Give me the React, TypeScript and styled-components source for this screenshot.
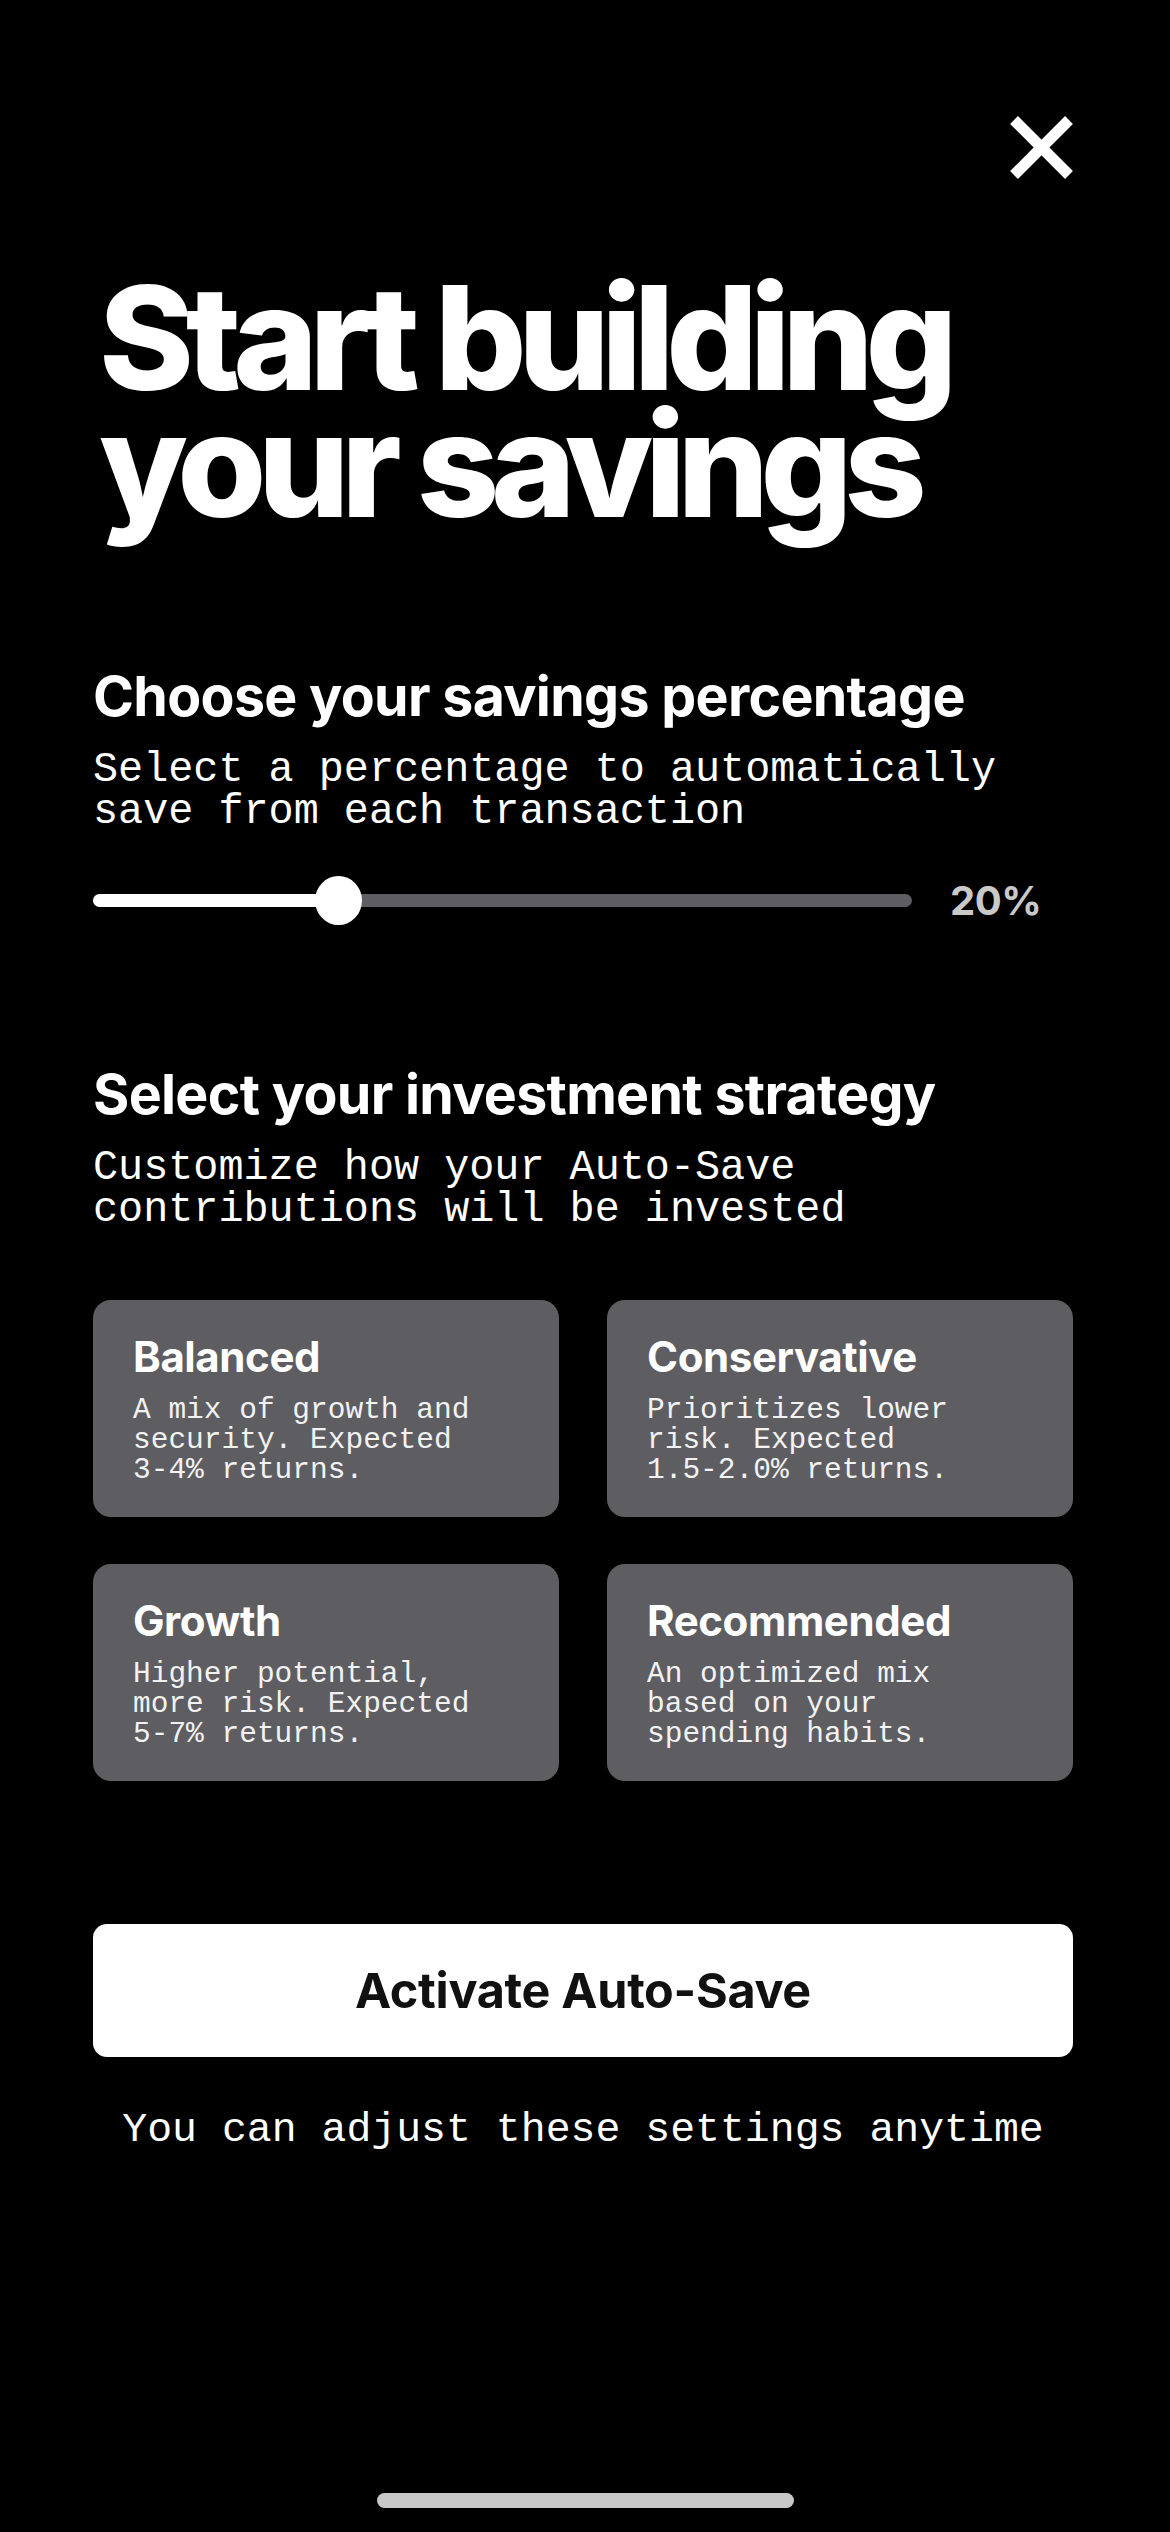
import React from "react";
import styled, { createGlobalStyle } from "styled-components";

const GlobalStyle = createGlobalStyle`
  html, body {
    margin: 0;
    padding: 0;
    background: #000;
  }
  * { box-sizing: border-box; }
`;

const SANS = `"Inter", "Liberation Sans", "Noto Sans", sans-serif`;
const MONO = `"Liberation Mono", "DejaVu Sans Mono", monospace`;

const Page = styled.main`
  position: relative;
  min-height: 2532px;
  width: 1170px;
  background: #000;
  padding: 116px 97px 0 93px;
  display: flex;
  flex-direction: column;
  color: #fff;
`;

const TopBar = styled.div`
  display: flex;
  justify-content: flex-end;
`;

const CloseButton = styled.button`
  width: 63px;
  height: 63px;
  padding: 0;
  border: none;
  background: transparent;
  display: flex;
  align-items: center;
  justify-content: center;
  cursor: pointer;
`;

const Title = styled.h1`
  margin: 95px 0 0 0;
  padding-left: 6px;
  font-family: ${SANS};
  font-weight: 800;
  font-size: 144px;
  line-height: 127px;
  letter-spacing: -8.3px;
  color: #fff;
`;

const Section = styled.section<{ $top: number }>`
  margin-top: ${(p) => p.$top}px;
  display: flex;
  flex-direction: column;
`;

const Heading = styled.h2`
  margin: 0;
  font-family: ${SANS};
  font-weight: 700;
  font-size: 55.5px;
  line-height: 56px;
  letter-spacing: -0.7px;
  color: #fff;
`;

const Subtitle = styled.p`
  margin: 25px 0 0 0;
  font-family: ${MONO};
  font-size: 41.8px;
  line-height: 42px;
  color: #fff;
`;

const SliderRow = styled.div`
  margin-top: 43px;
  display: flex;
  align-items: center;
  gap: 38px;
  height: 49px;
`;

const Track = styled.div`
  position: relative;
  flex: 1;
  height: 13px;
  border-radius: 7px;
  background: #5e5e62;
`;

const Fill = styled.div`
  height: 100%;
  border-radius: 7px;
  background: #fff;
`;

const Thumb = styled.div`
  position: absolute;
  top: 50%;
  width: 47px;
  height: 49px;
  margin-left: -23.5px;
  margin-top: -24.5px;
  border-radius: 50%;
  background: #fff;
`;

const Percent = styled.span`
  width: 123px;
  font-family: ${SANS};
  font-weight: 700;
  font-size: 40px;
  letter-spacing: -0.5px;
  color: #c9c9c9;
`;

const CardGrid = styled.div`
  margin-top: 69px;
  display: grid;
  grid-template-columns: 1fr 1fr;
  gap: 47px 48px;
`;

const Card = styled.button`
  height: 217px;
  padding: 33px 30px 0 40px;
  border: none;
  border-radius: 18px;
  background: #5e5e62;
  text-align: left;
  display: flex;
  flex-direction: column;
  align-items: flex-start;
  cursor: pointer;
`;

const CardTitle = styled.span`
  font-family: ${SANS};
  font-weight: 700;
  font-size: 42px;
  line-height: 48px;
  letter-spacing: -0.4px;
  color: #fff;
`;

const CardText = styled.span`
  margin-top: 14px;
  font-family: ${MONO};
  font-size: 29.5px;
  line-height: 30px;
  color: #f2f2f2;
  white-space: pre-line;
`;

const PrimaryButton = styled.button`
  margin-top: 143px;
  height: 133px;
  width: 100%;
  border: none;
  border-radius: 14px;
  background: #fff;
  font-family: ${SANS};
  font-weight: 700;
  font-size: 48.5px;
  letter-spacing: -0.3px;
  color: #111;
  cursor: pointer;
`;

const Footnote = styled.p`
  margin: 52px 0 0 0;
  text-align: center;
  font-family: ${MONO};
  font-size: 41.5px;
  line-height: 42px;
  color: #fff;
`;

const HomeIndicator = styled.div`
  position: absolute;
  left: 50%;
  bottom: 24px;
  width: 417px;
  height: 15px;
  margin-left: -208.5px;
  border-radius: 8px;
  background: #c8c8c8;
`;

const strategies = [
  { title: "Balanced", text: "A mix of growth and\nsecurity. Expected\n3-4% returns." },
  { title: "Conservative", text: "Prioritizes lower\nrisk. Expected\n1.5-2.0% returns." },
  { title: "Growth", text: "Higher potential,\nmore risk. Expected\n5-7% returns." },
  { title: "Recommended", text: "An optimized mix\nbased on your\nspending habits." },
];

const CloseIcon = () => (
  <svg width="63" height="63" viewBox="0 0 63 63" aria-hidden="true">
    <line x1="4" y1="4" x2="59" y2="59" stroke="#fff" strokeWidth="11" />
    <line x1="59" y1="4" x2="4" y2="59" stroke="#fff" strokeWidth="11" />
  </svg>
);

export default function App() {
  const position = 30; // percent of track where the thumb sits
  return (
    <>
      <GlobalStyle />
      <Page>
        <TopBar>
          <CloseButton aria-label="Close">
            <CloseIcon />
          </CloseButton>
        </TopBar>

        <Title>
          Start building
          <br />
          your savings
        </Title>

        <Section $top={140}>
          <Heading>Choose your savings percentage</Heading>
          <Subtitle>
            Select a percentage to automatically
            <br />
            save from each transaction
          </Subtitle>
          <SliderRow>
            <Track>
              <Fill style={{ width: `${position}%` }} />
              <Thumb style={{ left: `${position}%` }} />
            </Track>
            <Percent>20%</Percent>
          </SliderRow>
        </Section>

        <Section $top={141}>
          <Heading>Select your investment strategy</Heading>
          <Subtitle>
            Customize how your Auto-Save
            <br />
            contributions will be invested
          </Subtitle>
          <CardGrid>
            {strategies.map((s) => (
              <Card key={s.title}>
                <CardTitle>{s.title}</CardTitle>
                <CardText>{s.text}</CardText>
              </Card>
            ))}
          </CardGrid>
        </Section>

        <PrimaryButton>Activate Auto-Save</PrimaryButton>
        <Footnote>You can adjust these settings anytime</Footnote>

        <HomeIndicator />
      </Page>
    </>
  );
}
